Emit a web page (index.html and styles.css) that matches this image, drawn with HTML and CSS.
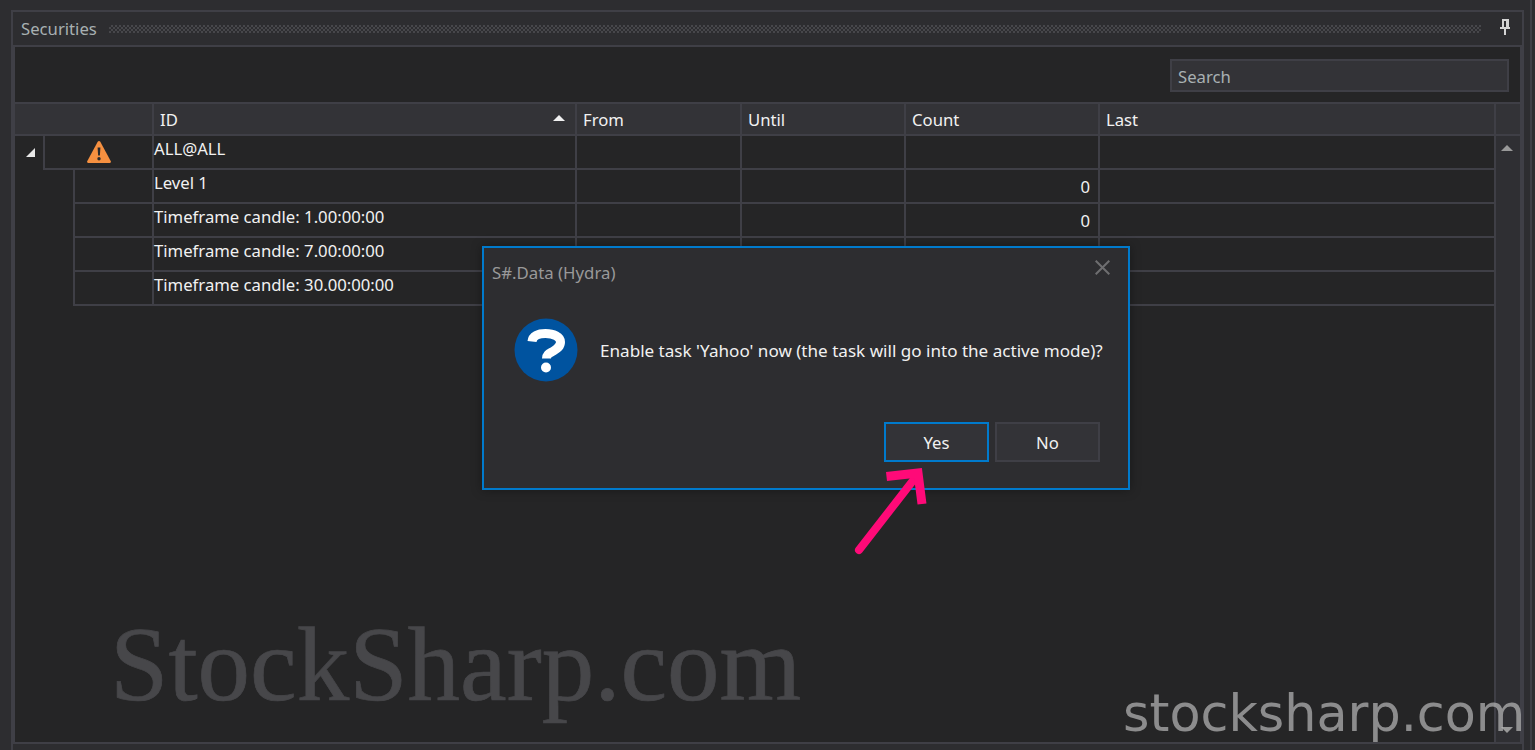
FILE: index.html
```html
<!DOCTYPE html>
<html lang="en">
<head>
<meta charset="utf-8">
<title>Securities</title>
<link rel="stylesheet" href="styles.css">
</head>
<body>
<div class="screen">
  <section class="panel">
    <header class="panel-head">
      <span class="panel-title">Securities</span>
      <span class="grip"></span>
      <svg class="pin" width="10" height="16" viewBox="0 0 10 16"><path fill="#d4d4d4" d="M2 0h7v8h1v2H6v6H4v-6H0V8h2z"/><path fill="#2d2d30" d="M4 2h2v6H4z"/></svg>
    </header>
    <div class="content">
      <div class="toolbar"><div class="search">Search</div></div>
      <div class="grid-head">
        <div class="hcell"></div>
        <div class="hcell hcell-sort">ID<svg class="sort" width="12" height="6" viewBox="0 0 12 6"><path fill="#f1f1f1" d="M6 0l6 6H0z"/></svg></div>
        <div class="hcell">From</div>
        <div class="hcell">Until</div>
        <div class="hcell">Count</div>
        <div class="hcell">Last</div>
        <div class="hcell hcell-end"></div>
      </div>
      <div class="grid-body">
        <div class="rows">
          <div class="row">
            <div class="lead">
              <div class="gap gap-root"><svg width="9" height="9" viewBox="0 0 9 9" class="expander"><path fill="#e8e8e8" d="M9 0v9H0z"/></svg></div>
              <div class="lead-box">
                <svg class="warn" width="24" height="22" viewBox="0 0 24 22"><path fill="#f69040" d="M12 0c.6 0 1 .3 1.3.8l10.500 19.400c.4.8-.1 1.800-1 1.800H1.200c-.9 0-1.400-1-1-1.800L10.700.8C11 .3 11.400 0 12 0z"/><path fill="#2a2a2c" d="M10.600 6.500h2.800l-.5 8h-1.800zM12 16a1.700 1.700 0 1 1 0 3.400A1.700 1.700 0 0 1 12 16z"/></svg>
              </div>
            </div>
            <div class="cell">ALL@ALL</div><div class="cell"></div><div class="cell"></div><div class="cell"></div><div class="cell cell-last"></div>
          </div>
          <div class="row">
            <div class="lead"><div class="gap gap-child"></div><div class="lead-box"></div></div>
            <div class="cell">Level 1</div><div class="cell"></div><div class="cell"></div><div class="cell cell-num">0</div><div class="cell cell-last"></div>
          </div>
          <div class="row">
            <div class="lead"><div class="gap gap-child"></div><div class="lead-box"></div></div>
            <div class="cell">Timeframe candle: 1.00:00:00</div><div class="cell"></div><div class="cell"></div><div class="cell cell-num">0</div><div class="cell cell-last"></div>
          </div>
          <div class="row">
            <div class="lead"><div class="gap gap-child"></div><div class="lead-box"></div></div>
            <div class="cell">Timeframe candle: 7.00:00:00</div><div class="cell"></div><div class="cell"></div><div class="cell cell-num">0</div><div class="cell cell-last"></div>
          </div>
          <div class="row">
            <div class="lead"><div class="gap gap-child"></div><div class="lead-box"></div></div>
            <div class="cell">Timeframe candle: 30.00:00:00</div><div class="cell"></div><div class="cell"></div><div class="cell cell-num">0</div><div class="cell cell-last"></div>
          </div>
        </div>
        <div class="scrollbar">
          <svg width="12" height="6" viewBox="0 0 12 6"><path fill="#999" d="M6 0l6 6H0z"/></svg>
          <svg width="12" height="6" viewBox="0 0 12 6"><path fill="#999" d="M6 6l6-6H0z"/></svg>
        </div>
      </div>
    </div>
  </section>
  <div class="side-edge"></div>
</div>

<span class="mark-serif">StockSharp.com</span>
<span class="mark-sans">stocksharp.com</span>

<div class="dialog">
  <div class="dialog-head">
    <span class="dialog-title">S#.Data (Hydra)</span>
    <svg class="dialog-close" width="15" height="15" viewBox="0 0 15 15"><path stroke="#6e6e70" stroke-width="2" fill="none" d="M.7.7l13.600 13.600M14.300.7L.7 14.300"/></svg>
  </div>
  <div class="dialog-body">
    <svg class="question" width="64" height="64" viewBox="0 0 64 64"><circle cx="32" cy="32" r="31.500" fill="#00539f"/><path fill="none" stroke="#fff" stroke-width="9" d="M18 23.500c.5-5.500 6-8 13.500-8 8 0 15 3 15 8.500 0 4.500-3 6.500-7 9-4.500 2.800-7 3.500-7 7.500"/><circle cx="32" cy="49.500" r="5" fill="#fff"/></svg>
    <p class="dialog-text">Enable task 'Yahoo' now (the task will go into the active mode)?</p>
  </div>
  <div class="dialog-actions">
    <button class="btn btn-primary">Yes</button>
    <button class="btn">No</button>
  </div>
</div>

<svg class="arrow" width="90" height="100" viewBox="0 0 90 100">
  <path d="M9 90L65 18" stroke="#ff0a78" stroke-width="8" stroke-linecap="round" fill="none"/>
  <path d="M36.500 16.500L68 13l4 31" stroke="#ff0a78" stroke-width="9" fill="none"/>
</svg>
</body>
</html>
```
FILE: styles.css
```css
* { box-sizing: border-box; }
html, body { margin: 0; height: 100%; }
body {
  position: relative;
  width: 1535px;
  height: 750px;
  overflow: hidden;
  background: #2d2d30;
  color: #f1f1f1;
  font-family: "Noto Sans", "Open Sans", sans-serif;
  font-size: 16.700px;
}
.screen {
  display: flex;
  height: 750px;
  padding: 10px 0 0 11px;
}
.panel {
  width: 1513px;
  display: flex;
  flex-direction: column;
  border: 2px solid #3f3f46;
  border-bottom: 0;
}
.side-edge {
  width: 2px;
  margin-left: 6px;
  margin-top: -10px;
  background: #3f3f46;
}
.panel-head {
  height: 35px;
  flex: none;
  display: flex;
  align-items: center;
  padding: 0 12px 0 8px;
  border-bottom: 2px solid #3f3f46;
}
.panel-title { color: #a8b0b2; width: 88px; flex: none; }
.grip {
  flex: none;
  width: 1372px;
  height: 8px;
  background: repeating-conic-gradient(#47474b 0 25%, transparent 0 50%) 0 0 / 4px 4px;
}
.pin { margin-left: 19px; flex: none; margin-top: -3px; }
.content {
  width: 1509px;
  height: 697px;
  flex: none;
  display: flex;
  flex-direction: column;
  background: #252526;
  border: 2px solid #3f3f46;
  border-top: 0;
}
.toolbar {
  flex: none;
  height: 57px;
  padding: 12px 11px 0 0;
  display: flex;
  justify-content: flex-end;
  align-items: flex-start;
  border-bottom: 2px solid #3f3f46;
}
.search {
  width: 339px;
  height: 33px;
  padding: 1px 0 0 6px;
  line-height: 29px;
  background: #333337;
  border: 2px solid #3f3f46;
  color: #a8b0b2;
}
.grid-head {
  flex: none;
  height: 32px;
  display: grid;
  grid-template-columns: 139px 423px 165px 164px 194px 396px 24px;
  background: #333337;
  border-bottom: 2px solid #3f3f46;
}
.hcell {
  display: flex;
  align-items: center;
  justify-content: space-between;
  padding: 1px 10px 0 6px;
  border-right: 2px solid #3f3f46;
  min-width: 0;
}
.hcell-end { border-right: 0; }
.sort { flex: none; margin-bottom: 4px; }
.grid-body {
  flex: 1;
  display: flex;
  min-height: 0;
}
.rows { width: 1479px; flex: none; }
.row {
  height: 34px;
  display: grid;
  grid-template-columns: 139px 423px 165px 164px 194px 394px;
  grid-template-rows: 34px;
}
.lead { display: flex; min-width: 0; }
.gap { flex: none; }
.gap-root { width: 28px; padding: 12px 0 0 11px; }
.gap-child { width: 58px; }
.expander { display: block; }
.lead-box {
  flex: 1;
  display: flex;
  justify-content: center;
  padding-top: 5px;
  border-left: 2px solid #3f3f46;
  border-right: 2px solid #3f3f46;
  border-bottom: 2px solid #3f3f46;
}
.warn { display: block; }
.cell {
  border-right: 2px solid #3f3f46;
  border-bottom: 2px solid #3f3f46;
  line-height: 26px;
  white-space: nowrap;
}
.cell-last { border-right: 0; }
.cell-num {
  text-align: right;
  padding-right: 8px;
  line-height: 34px;
  overflow: hidden;
}
.scrollbar {
  width: 26px;
  flex: none;
  display: flex;
  flex-direction: column;
  justify-content: space-between;
  align-items: center;
  padding: 9px 2px 9px 0;
  background: #2f2f33;
  border-left: 2px solid #3f3f46;
}
.mark-serif {
  position: absolute;
  left: 110px;
  top: 610px;
  font-family: "Liberation Serif", serif;
  font-size: 105px;
  line-height: 110px;
  color: #47474a;
  -webkit-text-stroke: .7px #47474a;
  white-space: nowrap;
}
.mark-sans {
  position: absolute;
  left: 1123px;
  top: 684px;
  font-family: "DejaVu Sans", sans-serif;
  font-size: 50.800px;
  line-height: 60px;
  color: rgba(190, 190, 190, .68);
  white-space: nowrap;
}
.dialog {
  position: absolute;
  left: 482px;
  top: 246px;
  width: 648px;
  height: 244px;
  display: flex;
  flex-direction: column;
  background: #2d2d30;
  border: 2px solid #007acc;
  box-shadow: 0 0 10px rgba(0, 0, 0, .35);
}
.dialog-head {
  flex: none;
  height: 59px;
  display: flex;
  justify-content: space-between;
  padding: 12px 18px 0 8px;
}
.dialog-title { color: #999; line-height: 22px; margin-top: 2px; font-size: 16.800px; }
.dialog-body {
  flex: none;
  display: flex;
  align-items: center;
  padding-left: 30px;
  gap: 22px;
  height: 86px;
}
.question { flex: none; }
.dialog-text { margin: 0; white-space: nowrap; font-size: 17.080px; }
.dialog-actions {
  flex: 1;
  display: flex;
  justify-content: flex-end;
  gap: 6px;
  padding: 29px 28px 0 0;
}
.btn {
  width: 105px;
  height: 40px;
  font: inherit;
  color: #f1f1f1;
  background: #333337;
  border: 2px solid #3f3f46;
  padding: 0;
}
.btn-primary { border-color: #007acc; }
.arrow {
  position: absolute;
  left: 850px;
  top: 460px;
}
```
